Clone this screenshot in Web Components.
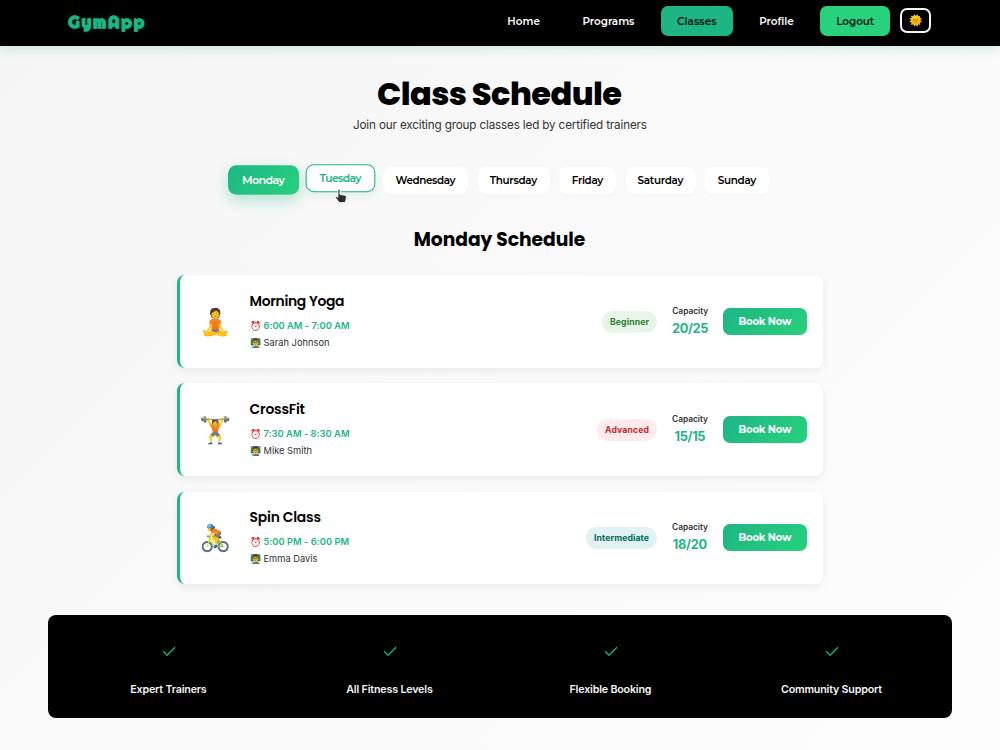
<!DOCTYPE html>
<html lang="en">
<head>
<meta charset="utf-8">
<title>GymApp</title>
<style>
  html, body { margin: 0; height: 100%; }
  body {
    --green: #1eb585;
    --bright: #28d17c;
    --heading: Poppins, Inter, sans-serif;
    --button: Montserrat, Inter, sans-serif;
    font-family: Inter, sans-serif;
    color: #000;
    overflow: hidden;
    background: linear-gradient(135deg, #f5f5f5 0%, #fafafa 50%, #fdfdfd 100%);
  }
</style>
</head>
<body>
<gym-app></gym-app>

<script>
const attach = (el, markup) => {
  el.attachShadow({ mode: 'open' }).innerHTML = markup
  return el.shadowRoot
}

// A single line of text, tracked out or in so that it fills `width` pixels.
class TextLine extends HTMLElement {
  connectedCallback() {
    if (this.shadowRoot) return
    const root = attach(this, `
      <style>
        :host { display: block; white-space: nowrap; }
        span { display: inline-block; }
      </style>
      <span><slot></slot></span>
    `)
    const width = Number(this.getAttribute('width'))
    if (!width) return
    const span = root.querySelector('span')
    const count = this.textContent.length
    const spacing = (width - span.getBoundingClientRect().width) / (count - 1)
    span.style.letterSpacing = spacing + 'px'
    span.style.marginRight = -spacing + 'px'
  }
}

class NavItem extends HTMLElement {
  connectedCallback() {
    attach(this, `
      <style>
        :host {
          display: flex;
          align-items: center;
          justify-content: center;
          box-sizing: border-box;
          height: 30px;
          padding: 0 16px;
          border-radius: 7px;
          color: #fff;
          font: 600 10.4px var(--button);
        }
        :host([active]) { background: var(--green); color: #04150f; }
        :host([logout]) { background: var(--bright); color: #04150f; }
      </style>
      <slot></slot>
    `)
  }
}

class AppHeader extends HTMLElement {
  connectedCallback() {
    attach(this, `
      <style>
        :host {
          display: flex;
          justify-content: space-between;
          box-sizing: border-box;
          height: 46px;
          padding: 6px 69px 0 68.5px;
          background: #000;
          box-shadow: 0 2px 11px rgba(30, 181, 133, .25);
        }
        .logo {
          margin-top: 6px;
          font: 700 16.5px/20px Righteous, Fredoka, "Baloo 2", Inter, sans-serif;
          color: var(--green);
          -webkit-text-stroke: .9px var(--green);
          text-shadow: 0 0 7px rgba(30, 181, 133, .3);
        }
        nav { display: flex; gap: 10.6px; }
        .theme {
          box-sizing: border-box;
          width: 31px;
          height: 25px;
          margin: 2px 0 0 -.8px;
          border: 2px solid #f5f5f5;
          border-radius: 7px;
          display: grid;
          place-items: center;
          padding-top: 1px;
          font-size: 10.7px;
          line-height: 1;
        }
      </style>
      <text-line class="logo" width="75.5">GymApp</text-line>
      <nav>
        <nav-item><text-line width="32.5">Home</text-line></nav-item>
        <nav-item><text-line width="52">Programs</text-line></nav-item>
        <nav-item active><text-line width="39.5">Classes</text-line></nav-item>
        <nav-item><text-line width="34.5">Profile</text-line></nav-item>
        <nav-item logout><text-line width="38">Logout</text-line></nav-item>
        <div class="theme">🌞</div>
      </nav>
    `)
  }
}

class DayTab extends HTMLElement {
  connectedCallback() {
    attach(this, `
      <style>
        :host {
          display: flex;
          align-items: center;
          justify-content: center;
          box-sizing: border-box;
          position: relative;
          height: 27px;
          border: 1px solid transparent;
          border-radius: 8px;
          background: #fff;
          font: 600 10.4px var(--button);
          box-shadow: 0 1px 3px rgba(0, 0, 0, .02);
        }
        :host([active]) {
          border: 0;
          height: 28px;
          color: #fff;
          background: linear-gradient(135deg, var(--green), var(--bright));
          box-shadow: 0 5px 14px rgba(30, 181, 133, .32);
          transform: scale(1.06);
        }
        :host([hover]) {
          color: var(--green);
          border-color: var(--green);
          transform: translateY(-2.3px) scale(1.04);
          box-shadow: 0 3px 9px rgba(30, 181, 133, .12);
        }
        svg { position: absolute; left: 27px; top: 23px; overflow: visible; }
      </style>
      <slot></slot>
      ${this.hasAttribute('hover') ? `
        <svg width="12" height="14" viewBox="0 0 12 14">
          <path d="M3 1.2C3-.1 5-.1 5 1.2V5l4.3.8c1.2.2 1.9.8 1.8 2l-.3 2.8-.9 2.4H4.4L.9 8.6C0 7.3 1.4 6.6 2.3 7.5L3 8z" fill="#2f2f2f" stroke="#fff" stroke-width=".9"/>
          <path d="M6.6 5.4V7M8.7 5.8v1.5" stroke="#777" stroke-width=".4"/>
        </svg>` : ''}
    `)
  }
}

class ClassCard extends HTMLElement {
  connectedCallback() {
    const get = name => this.getAttribute(name)
    attach(this, `
      <style>
        :host {
          display: flex;
          align-items: center;
          box-sizing: border-box;
          height: 92.5px;
          padding: 0 16px 0 18.5px;
          border-left: 3px solid var(--green);
          border-radius: 8px;
          background: #fff;
          box-shadow: 0 3px 10px rgba(0, 0, 0, .065);
        }
        .icon { width: 32px; text-align: center; font-size: 26px; line-height: 36px; }
        .info { flex: 1; margin: -1px 0 0 19px; }
        .name { font: 600 13.9px/20px var(--heading); }
        .row { display: flex; align-items: center; gap: 3px; font-size: 9.3px; line-height: 17.5px; color: #333; }
        .time { margin-top: 6px; font-weight: 600; color: var(--green); }
        .emoji { width: 11px; font-size: 9px; }
        .level {
          height: 22px;
          padding: 0 8px;
          border-radius: 11px;
          font-size: 8.7px;
          font-weight: 700;
          line-height: 22px;
        }
        .beginner { background: #e8f5e9; color: #2e7d32; }
        .advanced { background: #ffebee; color: #c62828; }
        .intermediate { background: #e0f2f1; color: #00695c; }
        .capacity { width: 36px; margin: -1px 15px 0; display: grid; justify-items: center; }
        .label { font-size: 8.4px; font-weight: 600; line-height: 15px; color: #333; }
        .count { font-size: 12.8px; font-weight: 700; line-height: 19px; color: var(--green); }
        button {
          width: 84px;
          height: 27px;
          padding: 0 0 1px;
          border: 0;
          border-radius: 7px;
          display: grid;
          place-items: center;
          color: #fff;
          background: linear-gradient(135deg, var(--green), var(--bright));
          font: 700 10.1px var(--button);
        }
      </style>
      <div class="icon">${get('icon')}</div>
      <div class="info">
        <text-line class="name" width="${get('name-width')}">${get('name')}</text-line>
        <div class="row time"><span class="emoji">⏰</span><text-line width="${get('time-width')}">${get('time')}</text-line></div>
        <div class="row"><span class="emoji">👨‍🏫</span><text-line width="${get('trainer-width')}">${get('trainer')}</text-line></div>
      </div>
      <div class="level ${get('level').toLowerCase()}"><text-line width="${get('level-width')}">${get('level')}</text-line></div>
      <div class="capacity">
        <text-line class="label" width="36">Capacity</text-line>
        <text-line class="count" width="${get('count-width')}">${get('count')}</text-line>
      </div>
      <button><text-line width="53">Book Now</text-line></button>
    `)
  }
}

class FeatureItem extends HTMLElement {
  connectedCallback() {
    attach(this, `
      <style>
        :host { display: grid; align-content: start; justify-items: center; color: #f5f5f5; font: 600 10.7px/16px Inter, sans-serif; }
        svg { margin: 28px 0 23px; }
      </style>
      <svg width="16" height="16" viewBox="0 0 16 16" fill="none">
        <path d="M2.2 8.2l3.8 4 8-8" stroke="#12b184" stroke-width="1.4"/>
      </svg>
      <slot></slot>
    `)
  }
}

class GymApp extends HTMLElement {
  connectedCallback() {
    attach(this, `
      <style>
        :host { display: block; }
        main { display: flex; flex-direction: column; align-items: center; }
        h1, h2, p { margin: 0; }
        h1 { margin: 27px 1px 0 0; font: 800 32px/42px var(--heading); }
        p { margin-top: 2px; font-size: 11.7px; line-height: 17px; color: #333; }
        .days {
          display: grid;
          grid-template-columns: 67px 67px 85px 72px 57px 70px 64px;
          gap: 9.5px;
          align-items: center;
          height: 28px;
          margin: 32px 1px 0 0;
        }
        h2 { margin: 32px 1px 0 0; font: 700 18.7px/28px var(--heading); }
        .classes { display: grid; gap: 15.6px; width: 646px; margin-top: 21.4px; }
        .features {
          display: grid;
          grid-template-columns: repeat(4, 1fr);
          box-sizing: border-box;
          width: 904px;
          height: 103.3px;
          margin-top: 30.8px;
          padding: 0 10px;
          border-radius: 8px;
          background: #000;
        }
      </style>
      <app-header></app-header>
      <main>
        <h1><text-line width="245">Class Schedule</text-line></h1>
        <p><text-line width="294">Join our exciting group classes led by certified trainers</text-line></p>
        <div class="days">
          <day-tab active><text-line width="43">Monday</text-line></day-tab>
          <day-tab hover><text-line width="42">Tuesday</text-line></day-tab>
          <day-tab><text-line width="60">Wednesday</text-line></day-tab>
          <day-tab><text-line width="47.5">Thursday</text-line></day-tab>
          <day-tab><text-line width="31.5">Friday</text-line></day-tab>
          <day-tab><text-line width="46">Saturday</text-line></day-tab>
          <day-tab><text-line width="38.5">Sunday</text-line></day-tab>
        </div>
        <h2><text-line width="171.5">Monday Schedule</text-line></h2>
        <div class="classes">
          <class-card icon="🧘" name="Morning Yoga" name-width="95" time="6:00 AM - 7:00 AM" time-width="86" trainer="Sarah Johnson" trainer-width="66" level="Beginner" level-width="39" count="20/25" count-width="36.5"></class-card>
          <class-card icon="🏋️" name="CrossFit" name-width="55.5" time="7:30 AM - 8:30 AM" time-width="86" trainer="Mike Smith" trainer-width="48.5" level="Advanced" level-width="44" count="15/15" count-width="31"></class-card>
          <class-card icon="🚴" name="Spin Class" name-width="71.5" time="5:00 PM - 6:00 PM" time-width="85.5" trainer="Emma Davis" trainer-width="54" level="Intermediate" level-width="55" count="18/20" count-width="34.5"></class-card>
        </div>
        <div class="features">
          <feature-item><text-line width="76.5">Expert Trainers</text-line></feature-item>
          <feature-item><text-line width="86.5">All Fitness Levels</text-line></feature-item>
          <feature-item><text-line width="82">Flexible Booking</text-line></feature-item>
          <feature-item><text-line width="101">Community Support</text-line></feature-item>
        </div>
      </main>
    `)
  }
}

// Outer elements go first so that a text line is measured with its final font.
customElements.define('gym-app', GymApp)
customElements.define('app-header', AppHeader)
customElements.define('class-card', ClassCard)
customElements.define('feature-item', FeatureItem)
customElements.define('nav-item', NavItem)
customElements.define('day-tab', DayTab)
customElements.define('text-line', TextLine)
</script>
</body>
</html>
